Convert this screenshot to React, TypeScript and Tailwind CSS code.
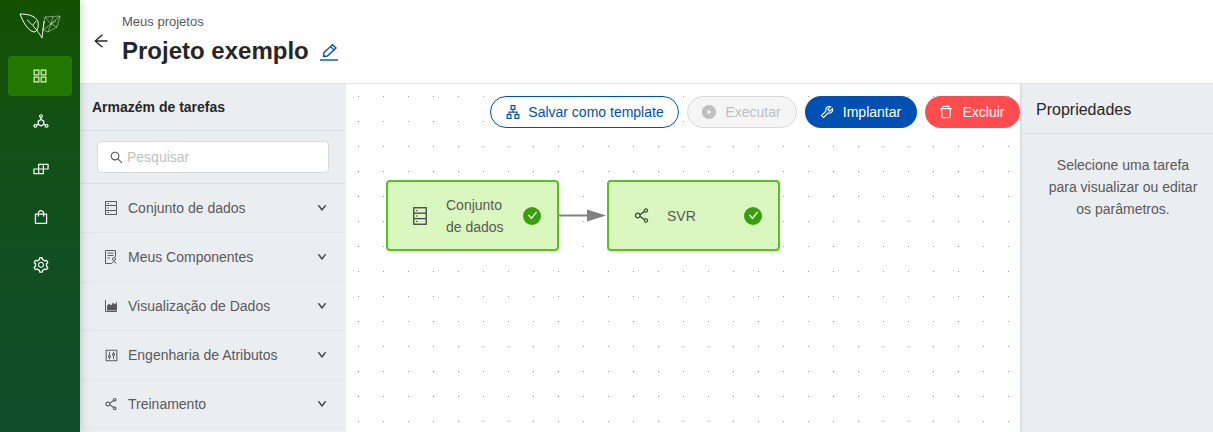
import { ReactNode } from "react";
import {
  AiOutlineApartment,
  AiOutlineAppstore,
  AiOutlineArrowLeft,
  AiOutlineBuild,
  AiOutlineCheck,
  AiOutlineControl,
  AiOutlineDelete,
  AiOutlineDeploymentUnit,
  AiOutlineDown,
  AiFillPlayCircle,
  AiOutlineSearch,
  AiOutlineSetting,
  AiOutlineShareAlt,
  AiOutlineShopping,
  AiOutlineTool,
} from "react-icons/ai";

const Logo = () => (
  <svg width="44" height="28" viewBox="0 0 44 28" fill="none" stroke="#fff">
    <path d="M2 1 C8 1 18 2 20 9 C21 14 19 19 16 19 C10 18 5 9 2 1Z" strokeWidth="1" />
    <path d="M9 7 C14 11 20 18 24 25 L26 8 M15 12 L18 8" strokeWidth="0.9" />
    <path
      d="M27 4 L42 3 L39 14 L30 19 L25 17 L27 4 M27 4 L33 11 L42 3 M33 11 L30 19 M33 11 L39 14 M25 17 L33 11 M35 4 L33 11 L38 8"
      strokeWidth="0.5"
      opacity="0.9"
    />
  </svg>
);

const DatasetIcon = () => (
  <svg viewBox="0 0 12 14" width="12" height="14" fill="none" stroke="currentColor">
    <rect x="0.5" y="0.5" width="11" height="13" />
    <path d="M0.5 4.5 H11.5 M0.5 9.5 H11.5" />
    <path d="M2.5 2.5 H4 M2.5 7 H4 M2.5 11.5 H4" />
  </svg>
);

const NodeDatasetIcon = () => (
  <svg viewBox="0 0 14 18" width="14" height="18" fill="none" stroke="currentColor" className="ml-[25px] mr-[19px] shrink-0 text-[#434343]">
    <rect x="0.75" y="0.75" width="12.5" height="16.5" strokeWidth="1.3" />
    <path d="M0.75 6.2 H13.25 M0.75 11.7 H13.25" strokeWidth="1.3" />
    <path d="M3 3.5 H4.5 M3 9 H4.5 M3 14.5 H4.5" />
  </svg>
);

const ComponentIcon = () => (
  <svg viewBox="0 0 12 14" width="12" height="14" fill="none" stroke="currentColor">
    <path d="M6.5 13.5 H0.5 V0.5 H10.5 V7" />
    <path d="M2.5 3 H8.5 M2.5 5.5 H8.5 M2.5 8 H5" />
    <circle cx="9" cy="9" r="1.5" />
    <path d="M6.7 13.5 C7 11.5 11 11.5 11.3 13.5" />
  </svg>
);

const AreaIcon = () => (
  <svg viewBox="0 0 12 12" width="12" height="12" fill="none">
    <path d="M0.5 0 V11.5 H12" stroke="currentColor" />
    <path d="M2 10.5 V6 L4 3.5 L6 5.5 L8 2.5 L10 4.5 L12 1.5 V10.5Z" fill="currentColor" />
  </svg>
);

const EditIcon = () => (
  <svg viewBox="0 0 18 17" width="18" height="17" fill="none" stroke="#0050b3" className="mt-[3px]">
    <path d="M3.5 12.5 L4 8.5 L12.5 0.8 L16 3.9 L7.5 12 Z" strokeWidth="1.4" strokeLinejoin="round" />
    <path d="M10.5 2.8 L14 5.9" strokeWidth="1.2" />
    <path d="M0 16 H18" strokeWidth="1.4" />
  </svg>
);

const navIcons = [AiOutlineDeploymentUnit, AiOutlineBuild, AiOutlineShopping, AiOutlineSetting];

const sections: { label: string; icon: ReactNode }[] = [
  { label: "Conjunto de dados", icon: <DatasetIcon /> },
  { label: "Meus Componentes", icon: <ComponentIcon /> },
  { label: "Visualização de Dados", icon: <AreaIcon /> },
  { label: "Engenharia de Atributos", icon: <AiOutlineControl size={15} className="-ml-px" /> },
  { label: "Treinamento", icon: <AiOutlineShareAlt size={16} className="-ml-[2px]" /> },
];

const Sidebar = () => (
  <aside className="z-10 flex w-20 shrink-0 flex-col items-center bg-gradient-to-b from-[#135200] to-[#0f4d2c] shadow-[2px_0_8px_rgba(0,0,0,0.15)]">
    <div className="flex h-14 w-full items-start justify-center pt-[13px]">
      <Logo />
    </div>
    <div className="flex h-10 w-16 items-center justify-center rounded-sm bg-[#237804] text-[#d9f7be]">
      <AiOutlineAppstore size={18} />
    </div>
    <div className="flex flex-col pt-px">
      {navIcons.map((Icon, i) => (
        <div key={i} className="flex h-12 w-16 items-center justify-center pl-px text-white">
          <Icon size={18} />
        </div>
      ))}
    </div>
  </aside>
);

const TaskStore = () => (
  <div className="flex w-[266px] shrink-0 flex-col bg-[#ebeef1]">
    <div className="flex h-[47px] shrink-0 items-center border-b border-[#dcdfe3] pl-3 text-sm font-bold text-[#262626]">
      Armazém de tarefas
    </div>
    <div className="flex h-[53px] shrink-0 items-center border-b border-[#dcdfe3] pl-[17px]">
      <div className="flex h-[32px] w-[232px] items-center gap-[3px] rounded-sm border border-[#d9d9d9] bg-white pl-[11px] text-sm text-[#bfbfbf]">
        <AiOutlineSearch size={15} className="text-[#595959]" />
        Pesquisar
      </div>
    </div>
    {sections.map((s) => (
      <div
        key={s.label}
        className="flex h-[49px] shrink-0 items-center border-b border-[#e3e5e8] pl-[25px] pr-[19px] text-sm text-[#595959]"
      >
        <span className="flex w-[23px] shrink-0 items-center">{s.icon}</span>
        <span className="flex-1">{s.label}</span>
        <AiOutlineDown size={10} className="mb-px stroke-[90] text-[#434343]" />
      </div>
    ))}
  </div>
);

const Node = ({ className, icon, children }: { className: string; icon: ReactNode; children: ReactNode }) => (
  <div
    className={`absolute top-[96px] flex h-[71px] w-[173px] items-center rounded border-2 border-[#52c41a] bg-[#d9f7be] text-sm text-[#595959] ${className}`}
  >
    {icon}
    {children}
    <span className="absolute left-[135px] flex h-[18px] w-[18px] items-center justify-center rounded-full bg-[#389e0d] text-white">
      <AiOutlineCheck size={11} className="stroke-[50]" />
    </span>
  </div>
);

const Canvas = () => (
  <div className="relative flex-1 bg-white bg-[radial-gradient(circle_at_12.5px_12.5px,#a6a6a6_0.5px,transparent_1px)] bg-[length:25px_25px]">
    <div className="flex justify-end gap-2 pt-3 text-sm">
      <button className="flex h-8 w-[189px] items-center justify-center gap-[7px] rounded-full border border-[#0050b3] bg-white text-[#0050b3]">
        <AiOutlineApartment size={16} />
        Salvar como template
      </button>
      <button className="flex h-8 w-[110px] items-center justify-center gap-2 rounded-full border border-[#d9d9d9] bg-[#f5f5f5] pr-0.5 text-[#bfbfbf]">
        <AiFillPlayCircle size={16} />
        Executar
      </button>
      <button className="flex h-8 w-[112px] items-center justify-center gap-2 rounded-full bg-[#0050b3] pr-0.5 text-white">
        <AiOutlineTool size={16} />
        Implantar
      </button>
      <button className="flex h-8 w-[95px] items-center justify-center gap-2 rounded-full bg-[#ff4d4f] pr-0.5 text-white">
        <AiOutlineDelete size={16} />
        Excluir
      </button>
    </div>
    <Node className="left-[40px]" icon={<NodeDatasetIcon />}>
      <span className="leading-[22px]">
        Conjunto
        <br />
        de dados
      </span>
    </Node>
    <svg className="absolute left-[212px] top-[122px]" width="50" height="20" viewBox="0 0 50 20">
      <path d="M1 9.5 H30" stroke="#808080" strokeWidth="2" />
      <path d="M29 3.5 L48 9.5 L29 15.5Z" fill="#808080" />
    </svg>
    <Node className="left-[261px]" icon={<AiOutlineShareAlt size={19} className="ml-[23px] mr-[16px] shrink-0 text-[#434343]" />}>
      SVR
    </Node>
  </div>
);

const Properties = () => (
  <div className="flex w-[193px] shrink-0 flex-col border-l-2 border-[#dcdfe3] bg-[#ebeef1]">
    <div className="flex h-[50px] shrink-0 items-center border-b border-[#d9dce0] pl-[14px] pt-0.5 text-base text-[#262626]">
      Propriedades
    </div>
    <p className="pl-[11px] pt-[20px] text-center text-sm leading-[22px] text-[#595959]">
      Selecione uma tarefa
      <br />
      para visualizar ou editar
      <br />
      os parâmetros.
    </p>
  </div>
);

const App = () => {
  return (
    <div className="flex h-[432px] w-[1213px] overflow-hidden bg-white font-['Liberation_Sans',Arial,sans-serif]">
      <Sidebar />
      <div className="flex min-w-0 flex-1 flex-col">
        <header className="flex h-[84px] shrink-0 border-b border-[#e3e3e3] bg-white">
          <AiOutlineArrowLeft size={18} className="ml-3 mt-8 shrink-0 text-[#262626]" />
          <div className="ml-3 pt-[13px]">
            <div className="text-[13px] leading-[18px] text-[#595959]">Meus projetos</div>
            <div className="mt-[4px] flex items-center gap-[11px]">
              <h1 className="text-2xl font-bold leading-[32px] text-[#262626]">Projeto exemplo</h1>
              <EditIcon />
            </div>
          </div>
        </header>
        <div className="flex min-h-0 flex-1">
          <TaskStore />
          <Canvas />
          <Properties />
        </div>
      </div>
    </div>
  );
};

export default App;
